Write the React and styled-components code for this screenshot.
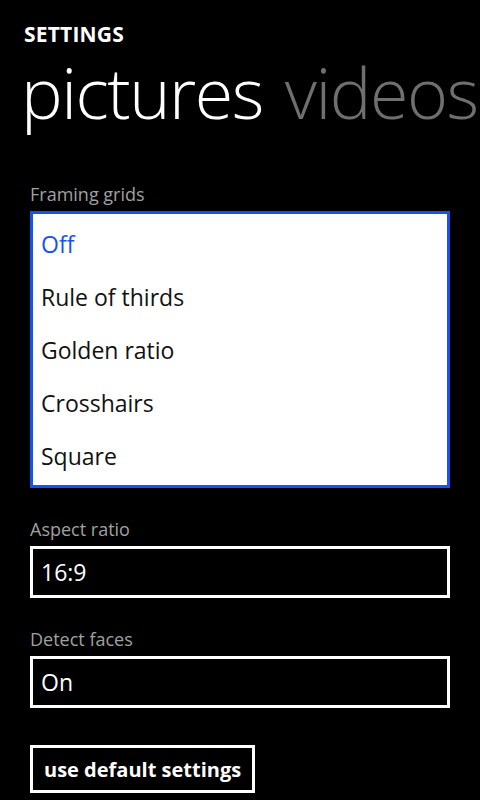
import styled, { createGlobalStyle } from "styled-components";

const GlobalStyle = createGlobalStyle`
  html, body {
    margin: 0;
    padding: 0;
    background: #000;
  }
  body {
    font-family: "Open Sans", "Noto Sans", sans-serif;
    color: #fff;
  }
`;

const Page = styled.div`
  width: 480px;
  height: 800px;
  overflow: hidden;
  background: #000;
`;

const Title = styled.div`
  padding: 21px 0 0 24px;
  font-size: 21px;
  font-weight: 700;
  line-height: 26px;
  letter-spacing: 0.2px;
`;

const Pivot = styled.div`
  display: flex;
  gap: 22px;
  padding-left: 21px;
  margin-top: 5px;
  white-space: nowrap;
  font-size: 70px;
  font-weight: 300;
  line-height: 80px;
  letter-spacing: -1.5px;
`;

const PivotItem = styled.span`
  color: ${(p) => (p.$active ? "#fff" : "#6f6f6f")};
`;

const Content = styled.div`
  display: flex;
  flex-direction: column;
  padding: 51px 30px 0 30px;
`;

const Label = styled.div`
  font-size: 18px;
  line-height: 22px;
  color: #a0a0a0;
  margin-bottom: 6px;
`;

const List = styled.div`
  display: flex;
  flex-direction: column;
  border: 3px solid #1652f0;
  background: #fff;
  padding: 3px 0 3px 8px;
  height: 277px;
  box-sizing: border-box;
`;

const Option = styled.div`
  height: 54px;
  display: flex;
  align-items: center;
  font-size: 23px;
  color: ${(p) => (p.$selected ? "#1652f0" : "#111")};
`;

const Picker = styled.div`
  display: flex;
  align-items: center;
  height: 52px;
  box-sizing: border-box;
  border: 3px solid #fff;
  padding-left: 8px;
  font-size: 23px;
  margin-bottom: 30px;
`;

const Group = styled.div`
  display: flex;
  flex-direction: column;
  margin-top: ${(p) => p.$top || 0}px;
`;

const Button = styled.button`
  align-self: flex-start;
  background: #000;
  color: #fff;
  border: 3px solid #fff;
  height: 48px;
  padding: 0 11px;
  font-family: "Open Sans", "Noto Sans", sans-serif;
  font-size: 20px;
  font-weight: 700;
  margin-top: 7px;
`;

const frames = ["Off", "Rule of thirds", "Golden ratio", "Crosshairs", "Square"];

export default function App() {
  return (
    <Page>
      <GlobalStyle />
      <Title>SETTINGS</Title>
      <Pivot>
        <PivotItem $active>pictures</PivotItem>
        <PivotItem>videos</PivotItem>
      </Pivot>
      <Content>
        <Label>Framing grids</Label>
        <List>
          {frames.map((f, i) => (
            <Option key={f} $selected={i === 0}>
              {f}
            </Option>
          ))}
        </List>
        <Group $top={30}>
          <Label>Aspect ratio</Label>
          <Picker>16:9</Picker>
        </Group>
        <Group>
          <Label>Detect faces</Label>
          <Picker>On</Picker>
        </Group>
        <Button>use default settings</Button>
      </Content>
    </Page>
  );
}
